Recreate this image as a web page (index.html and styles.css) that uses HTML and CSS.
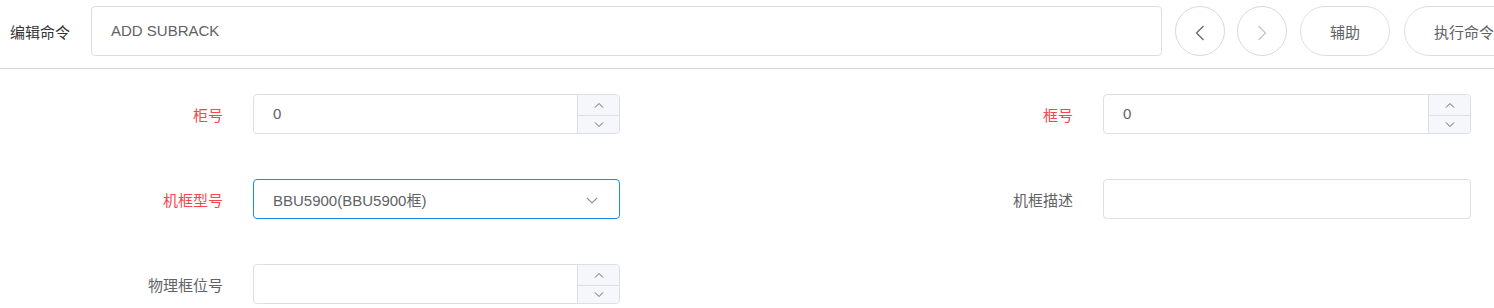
FILE: index.html
```html
<!DOCTYPE html>
<html lang="zh-CN">
<head>
<meta charset="utf-8">
<title>ADD SUBRACK</title>
<link rel="stylesheet" href="styles.css">
</head>
<body>
<div class="page">
  <div class="cmd-bar">
    <span class="cmd-label">编辑命令</span>
    <div class="cmd-input">ADD SUBRACK</div>
    <button class="circle-btn first" type="button">
      <svg width="10" height="16" viewBox="0 0 10 16"><polyline points="8.5,1 1.5,8 8.5,15" fill="none" stroke="#606266" stroke-width="1.2"/></svg>
    </button>
    <button class="circle-btn second disabled" type="button">
      <svg width="10" height="16" viewBox="0 0 10 16"><polyline points="1.5,1 8.5,8 1.5,15" fill="none" stroke="#c0c4cc" stroke-width="1.2"/></svg>
    </button>
    <button class="pill-btn assist" type="button">辅助</button>
    <button class="pill-btn run" type="button">执行命令</button>
  </div>

  <div class="form-grid">
    <div class="form-label required">柜号</div>
    <div class="num-input">
      <span class="num-value">0</span>
      <div class="num-ctrl">
        <span class="num-up"><svg width="10" height="6" viewBox="0 0 10 6"><polyline points="1,5.5 5,1.5 9,5.5" fill="none" stroke="#606266" stroke-width="1"/></svg></span>
        <span class="num-down"><svg width="10" height="6" viewBox="0 0 10 6"><polyline points="1,0.5 5,4.5 9,0.5" fill="none" stroke="#606266" stroke-width="1"/></svg></span>
      </div>
    </div>
    <div class="form-label required">框号</div>
    <div class="num-input wide">
      <span class="num-value">0</span>
      <div class="num-ctrl">
        <span class="num-up"><svg width="10" height="6" viewBox="0 0 10 6"><polyline points="1,5.5 5,1.5 9,5.5" fill="none" stroke="#606266" stroke-width="1"/></svg></span>
        <span class="num-down"><svg width="10" height="6" viewBox="0 0 10 6"><polyline points="1,0.5 5,4.5 9,0.5" fill="none" stroke="#606266" stroke-width="1"/></svg></span>
      </div>
    </div>

    <div class="form-label required">机框型号</div>
    <div class="select-input focused">
      <span class="select-value">BBU5900(BBU5900框)</span>
      <svg class="select-arrow" width="12" height="7" viewBox="0 0 12 7"><polyline points="1,1 6,6 11,1" fill="none" stroke="#909399" stroke-width="1.1"/></svg>
    </div>
    <div class="form-label">机框描述</div>
    <div class="text-input wide"></div>

    <div class="form-label">物理框位号</div>
    <div class="num-input">
      <span class="num-value"></span>
      <div class="num-ctrl">
        <span class="num-up"><svg width="10" height="6" viewBox="0 0 10 6"><polyline points="1,5.5 5,1.5 9,5.5" fill="none" stroke="#606266" stroke-width="1"/></svg></span>
        <span class="num-down"><svg width="10" height="6" viewBox="0 0 10 6"><polyline points="1,0.5 5,4.5 9,0.5" fill="none" stroke="#606266" stroke-width="1"/></svg></span>
      </div>
    </div>
  </div>
</div>
</body>
</html>
```

FILE: styles.css
```css
html, body {
  margin: 0;
  padding: 0;
  background: #ffffff;
  overflow: hidden;
}

body {
  font-family: "Liberation Sans", "Noto Sans CJK SC", sans-serif;
  font-size: 15px;
  color: #606266;
}

.page {
  width: 1494px;
  height: 308px;
  overflow: hidden;
}

/* ---------- command bar ---------- */
.cmd-bar {
  display: flex;
  align-items: center;
  flex-wrap: nowrap;
  padding: 6px 0 12px 10px;
  border-bottom: 1px solid #d4d4d4;
  height: 50px;
}

.cmd-label {
  flex: 0 0 auto;
  width: 60px;
  margin-right: 21px;
  color: #333333;
  white-space: nowrap;
}

.cmd-input {
  flex: 0 0 auto;
  box-sizing: border-box;
  width: 1071px;
  height: 50px;
  line-height: 48px;
  padding-left: 19px;
  border: 1px solid #dcdfe6;
  border-radius: 4px;
  color: #606266;
  white-space: nowrap;
}

.circle-btn {
  flex: 0 0 auto;
  box-sizing: border-box;
  width: 50px;
  height: 50px;
  border-radius: 50%;
  border: 1px solid #d7d9de;
  background: #ffffff;
  padding: 0;
  display: flex;
  align-items: center;
  justify-content: center;
}

.circle-btn svg {
  display: block;
  margin-top: 3px;
}

.circle-btn.first { margin-left: 13px; }
.circle-btn.second { margin-left: 12px; }

.pill-btn {
  flex: 0 0 auto;
  box-sizing: border-box;
  height: 50px;
  padding: 0 29px;
  border-radius: 25px;
  border: 1px solid #dcdfe6;
  background: #ffffff;
  color: #606266;
  font-family: "Liberation Sans", "Noto Sans CJK SC", sans-serif;
  font-size: 15px;
  white-space: nowrap;
}

.pill-btn.assist { margin-left: 13px; }
.pill-btn.run { margin-left: 14px; }

/* ---------- form ---------- */
.form-grid {
  display: grid;
  grid-template-columns: 253px 367px 483px 368px;
  grid-auto-rows: 40px;
  row-gap: 45px;
  align-items: center;
  margin-top: 25px;
}

.form-label {
  box-sizing: border-box;
  padding-right: 30px;
  text-align: right;
  color: #606266;
  white-space: nowrap;
}

.form-label.required {
  color: #f5464e;
}

.num-input,
.select-input,
.text-input {
  box-sizing: border-box;
  height: 40px;
  border: 1px solid #dcdfe6;
  border-radius: 4px;
  background: #ffffff;
  display: flex;
  align-items: stretch;
}

.num-value {
  flex: 1 1 auto;
  padding-left: 19px;
  line-height: 38px;
  color: #606266;
}

.num-ctrl {
  flex: 0 0 41px;
  display: flex;
  flex-direction: column;
  border-left: 1px solid #dcdfe6;
  background: #f5f7fa;
  border-radius: 0 4px 4px 0;
}

.num-up {
  height: 20px;
  display: flex;
  align-items: center;
  justify-content: center;
  border-bottom: 1px solid #dcdfe6;
}

.num-down {
  flex: 1 1 auto;
  display: flex;
  align-items: center;
  justify-content: center;
}

.num-ctrl svg {
  display: block;
}

.select-input {
  align-items: center;
  justify-content: space-between;
  padding: 0 21px 0 19px;
}

.select-input.focused {
  border-color: #1a8de4;
}

.select-value {
  color: #606266;
  white-space: nowrap;
}

.select-arrow {
  display: block;
  margin-top: 2px;
}
```
